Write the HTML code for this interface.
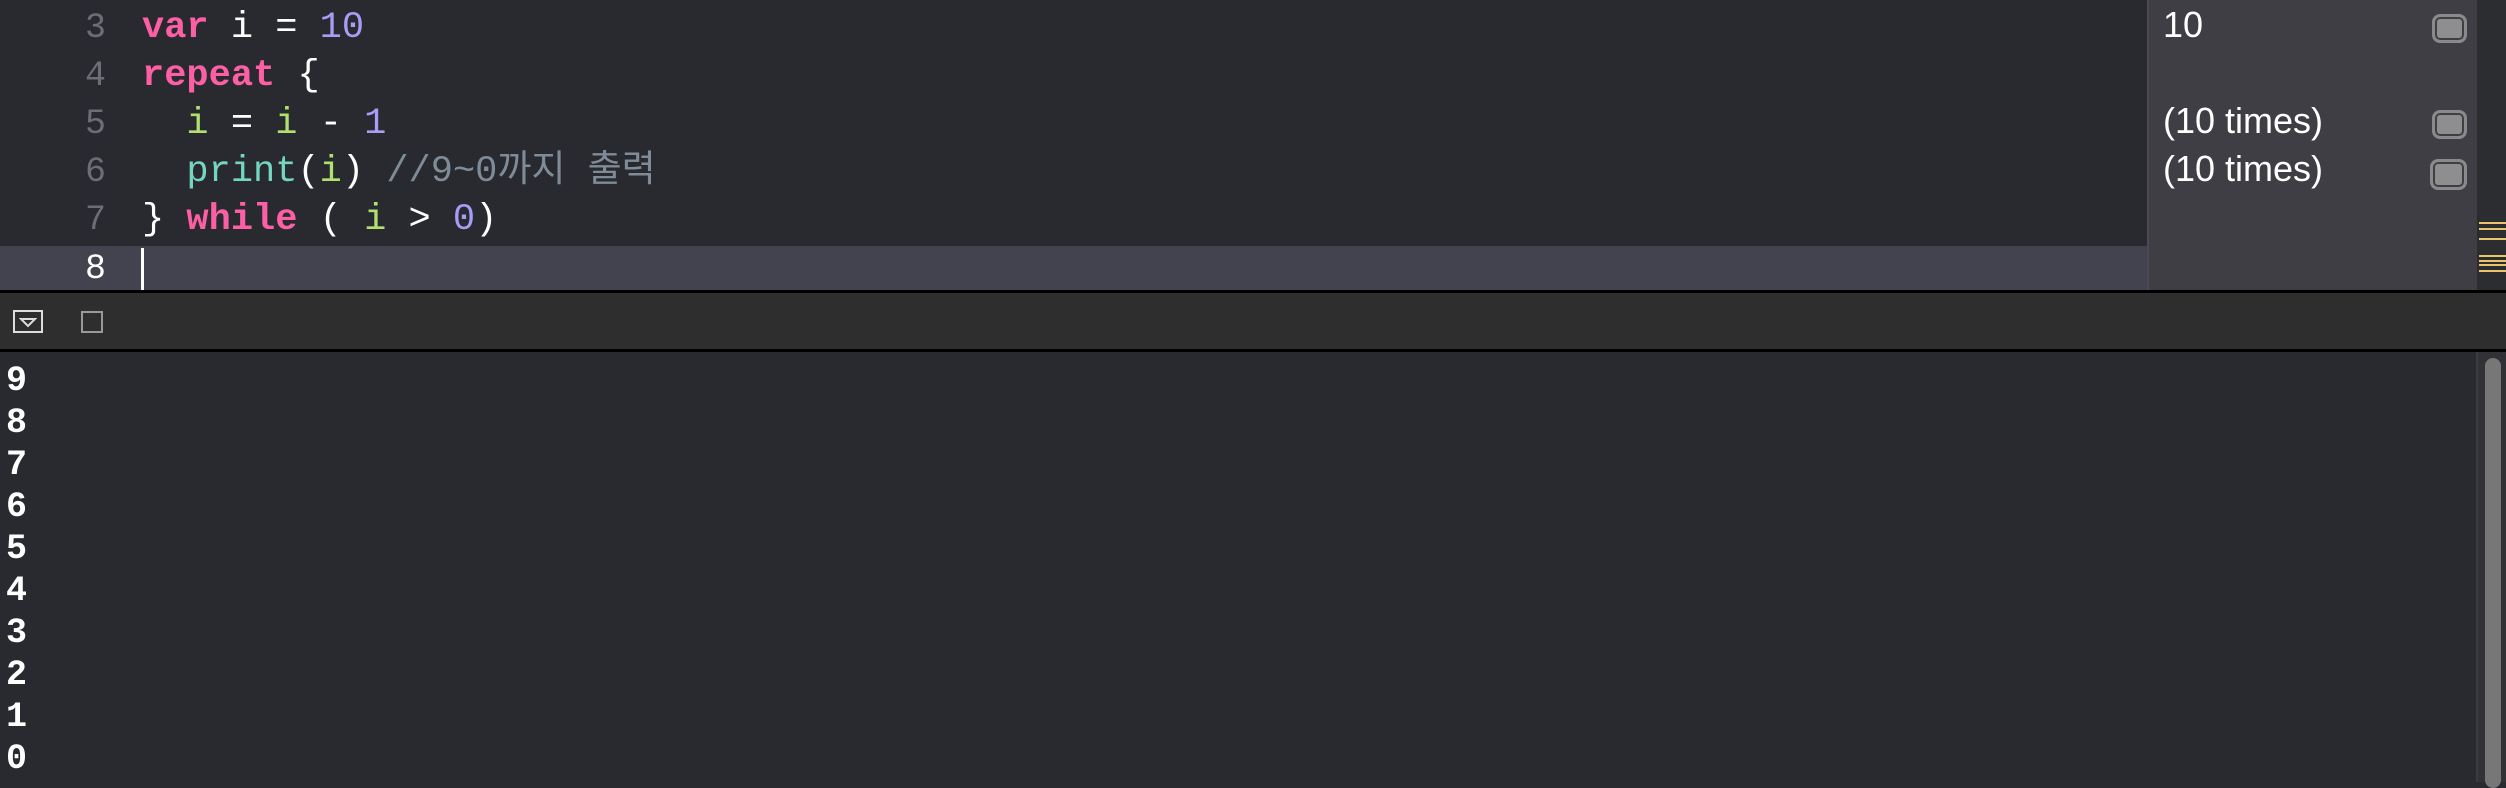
<!DOCTYPE html>
<html><head><meta charset="utf-8"><style>
*{margin:0;padding:0;box-sizing:border-box}
body{width:2506px;height:782px;background:#292a30;position:relative;overflow:hidden;font-family:"Liberation Mono","Noto Sans CJK KR",monospace}
.ed{position:absolute;left:0;top:0;width:2147px;height:291px;background:#292a30}
.hl{position:absolute;left:0;top:246px;width:2147px;height:45px;background:#434350}
.ln{position:absolute;left:0;width:106px;text-align:right;color:#6c6d75;font-size:35px;line-height:48px;height:48px}
.code{position:absolute;left:142px;font-size:37px;line-height:48px;height:48px;color:#fff;white-space:pre}
.k{color:#fc5fa3;font-weight:bold}.n{color:#a79df6}.v{color:#b1e06f}.f{color:#74d6c1}.c{color:#7f8c98}
.side{position:absolute;left:2147px;top:0;width:330px;height:291px;background:#3e3e44;border-left:2px solid #4a4a50}
.st{position:absolute;left:14px;font-family:"Liberation Sans",sans-serif;font-size:36px;color:#fff}
.ic{position:absolute;left:283px;width:35px;height:29px;border:3px solid #8a8a8a;border-radius:8px;background:#8e8e8e;box-shadow:inset 0 0 0 2px #3e3e44}
.mini{position:absolute;left:2477px;top:0;width:29px;height:291px;background:#2c2d31}
.mini i{position:absolute;left:2px;width:27px;height:2px;background:#e9c46a}
.bar{position:absolute;left:0;top:290px;width:2506px;height:62px;background:#2e2e2e;border-top:3px solid #000;border-bottom:3px solid #000}
.con{position:absolute;left:6px;top:360px;font-size:35px;font-weight:bold;color:#fff;line-height:42px}
.sb{position:absolute;left:2476px;top:352px;width:30px;height:430px;background:#323236;border-left:2px solid #3c3c40}
.sb i{position:absolute;left:7px;top:6px;width:16px;height:430px;background:#777;border-radius:8px}
</style></head><body>
<div class="ed"></div>
<div class="hl"></div>
<div class="ln" style="top:4px">3</div>
<div class="ln" style="top:52px">4</div>
<div class="ln" style="top:100px">5</div>
<div class="ln" style="top:148px">6</div>
<div class="ln" style="top:196px">7</div>
<div class="ln" style="top:245px;color:#fff">8</div>
<div class="code" style="top:4px"><span class="k">var</span> i = <span class="n">10</span></div>
<div class="code" style="top:52px"><span class="k">repeat</span> {</div>
<div class="code" style="top:100px">  <span class="v">i</span> = <span class="v">i</span> - <span class="n">1</span></div>
<div class="code" style="top:148px">  <span class="f">print</span>(<span class="v">i</span>) <span class="c">//9~0까지 출력</span></div>
<div class="code" style="top:196px">} <span class="k">while</span> ( <span class="v">i</span> &gt; <span class="n">0</span>)</div>
<div style="position:absolute;left:141px;top:248px;width:3px;height:43px;background:#fff"></div>
<div class="side">
<div class="st" style="top:4px">10</div>
<div class="ic" style="top:14px"></div>
<div class="st" style="top:100px">(10 times)</div>
<div class="ic" style="top:110px"></div>
<div class="st" style="top:148px">(10 times)</div>
<div class="ic" style="top:159px;left:281px;width:37px;height:31px"></div>
</div>
<div class="mini"><i style="top:222px"></i><i style="top:228px"></i><i style="top:238px"></i><i style="top:255px"></i><i style="top:260px"></i><i style="top:264px"></i><i style="top:270px"></i></div>
<div class="bar">
<div style="position:absolute;left:13px;top:17px;width:30px;height:23px;border:2px solid #ddd"></div>
<svg style="position:absolute;left:19px;top:24px" width="18" height="11"><path d="M2 2 L16 2 L9 9 Z" fill="none" stroke="#ddd" stroke-width="2"/></svg>
<div style="position:absolute;left:81px;top:18px;width:22px;height:22px;border:2px solid #999"></div>
</div>
<div class="con">9<br>8<br>7<br>6<br>5<br>4<br>3<br>2<br>1<br>0</div>
<div class="sb"><i></i></div>
</body></html>
